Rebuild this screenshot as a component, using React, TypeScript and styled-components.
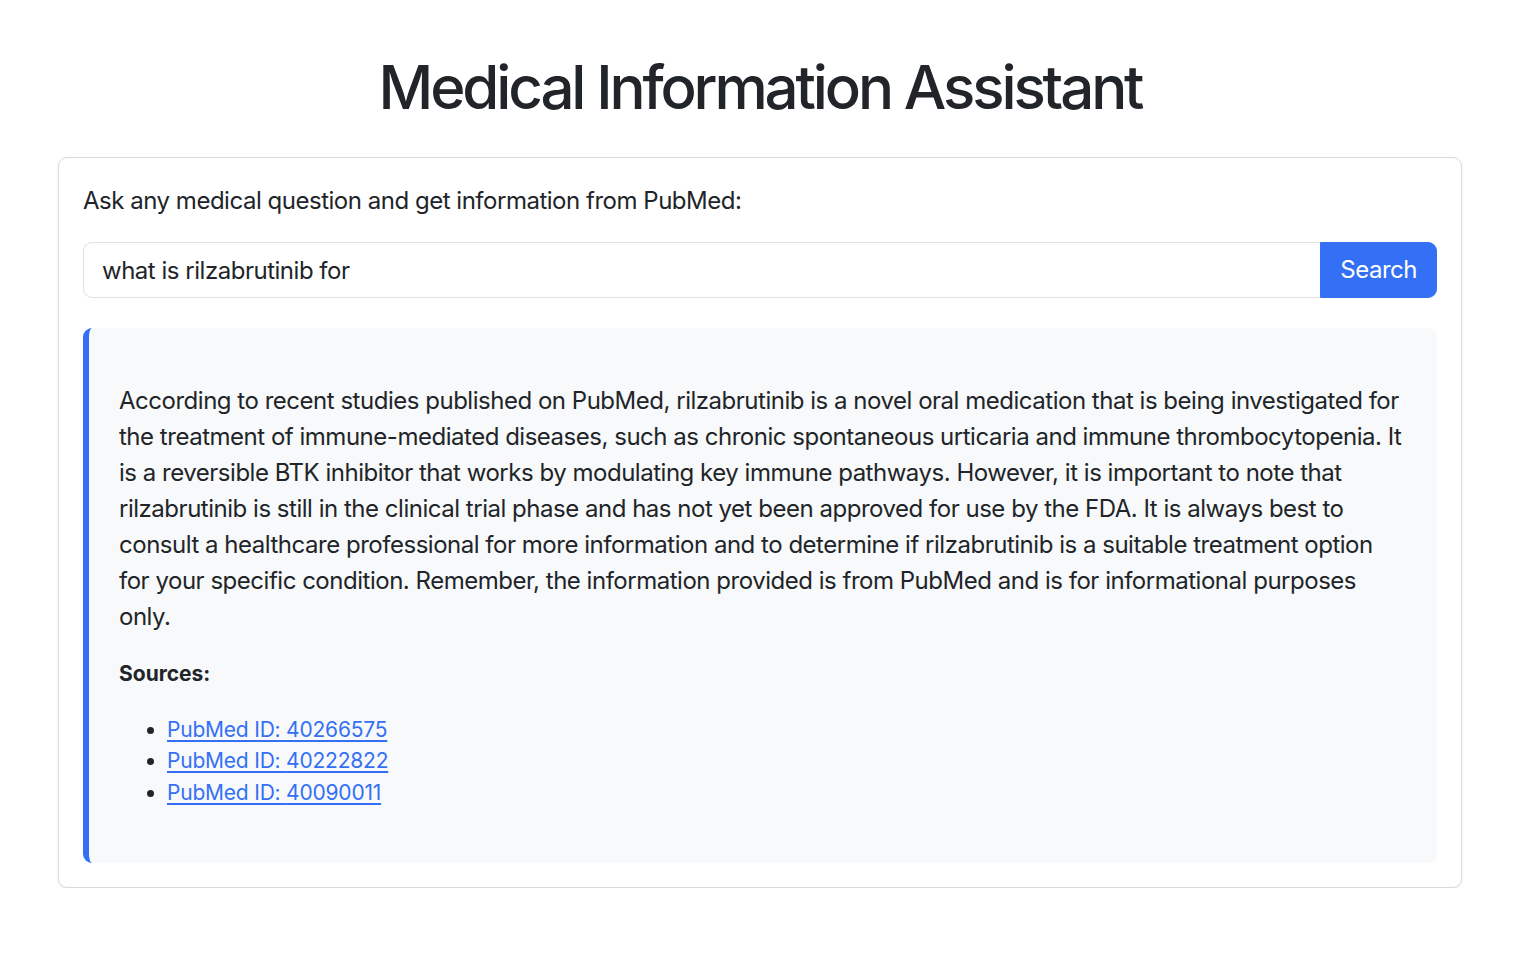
import * as React from 'react'
import styled, { createGlobalStyle } from 'styled-components'

const GlobalStyle = createGlobalStyle`
  body {
    margin: 0;
    padding-right: 10px;
    background: #fff;
    color: #212529;
    font-family: Inter, 'Noto Sans', sans-serif;
    font-size: 24px;
    line-height: 1.5;
    letter-spacing: -0.02em;
  }
  * {
    box-sizing: border-box;
  }
`

const Container = styled.div`
  width: 1404px;
  margin: 0 auto;
`

const Title = styled.h1`
  margin: 51px 0 34px;
  font-size: 60px;
  font-weight: 500;
  line-height: 1.2;
  text-align: center;
  letter-spacing: -0.052em;
`

const Card = styled.div`
  background: #fff;
  border: 1px solid #d9dadb;
  border-radius: 9px;
  box-shadow: 0 2px 4px rgba(0, 0, 0, 0.06);
  padding: 25px 24px 24px;
`

const Prompt = styled.p`
  margin: 0 0 23px;
`

const InputGroup = styled.form`
  display: flex;
  margin-bottom: 30px;
`

const Input = styled.input`
  flex: 1;
  min-width: 0;
  height: 56px;
  padding: 9px 18px;
  font: inherit;
  letter-spacing: inherit;
  color: #212529;
  border: 1px solid #dee2e6;
  border-right: none;
  border-radius: 9px 0 0 9px;
  outline: none;
`

const Button = styled.button`
  height: 56px;
  padding: 9px 19px;
  font: inherit;
  letter-spacing: inherit;
  color: #fff;
  background: #3470f5;
  border: 1px solid #3470f5;
  border-radius: 0 9px 9px 0;
  cursor: pointer;
`

const Answer = styled.div`
  background: #f8f9fa;
  border-left: 6px solid #3470f5;
  border-radius: 9px;
  padding: 55px 30px 31px;
`

const AnswerText = styled.p`
  margin: 0 0 23px;
`

const SourcesTitle = styled.p`
  margin: 0 0 24px;
  font-size: 21px;
  font-weight: 700;
  letter-spacing: 0;
`

const SourceList = styled.ul`
  margin: 0 0 24px;
  padding-left: 48px;
  font-size: 21px;
  letter-spacing: -0.01em;
`

const SourceItem = styled.li`
  line-height: 1.5;
`

const SourceLink = styled.a`
  color: #3470f5;
  text-decoration: underline;
  text-underline-offset: 3px;
`

const sources = ['40266575', '40222822', '40090011']

export default function App() {
  return (
    <>
      <GlobalStyle />
      <Container>
        <Title>Medical Information Assistant</Title>
        <Card>
          <Prompt>Ask any medical question and get information from PubMed:</Prompt>
          <InputGroup onSubmit={e => e.preventDefault()}>
            <Input defaultValue="what is rilzabrutinib for" />
            <Button type="submit">Search</Button>
          </InputGroup>
          <Answer>
            <AnswerText>
              According to recent studies published on PubMed, rilzabrutinib is a novel oral
              medication that is being investigated for the treatment of immune-mediated
              diseases, such as chronic spontaneous urticaria and immune thrombocytopenia. It
              is a reversible BTK inhibitor that works by modulating key immune pathways.
              However, it is important to note that rilzabrutinib is still in the clinical trial
              phase and has not yet been approved for use by the FDA. It is always best to
              consult a healthcare professional for more information and to determine if
              rilzabrutinib is a suitable treatment option for your specific condition.
              Remember, the information provided is from PubMed and is for informational
              purposes only.
            </AnswerText>
            <SourcesTitle>Sources:</SourcesTitle>
            <SourceList>
              {sources.map(id => (
                <SourceItem key={id}>
                  <SourceLink href={`https://pubmed.ncbi.nlm.nih.gov/${id}/`}>
                    PubMed ID: {id}
                  </SourceLink>
                </SourceItem>
              ))}
            </SourceList>
          </Answer>
        </Card>
      </Container>
    </>
  )
}
